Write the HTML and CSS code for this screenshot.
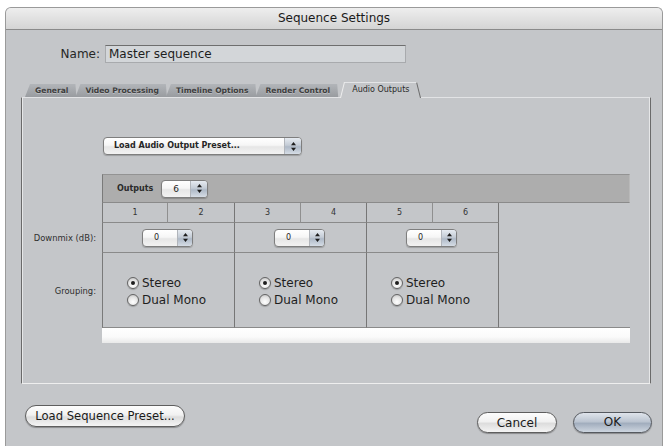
FILE: index.html
```html
<!DOCTYPE html>
<html>
<head>
<meta charset="utf-8">
<title>Sequence Settings</title>
<link rel="stylesheet" href="styles.css">
</head>
<body>
<div class="window">
  <div class="titlebar">Sequence Settings</div>
  <div class="name-row">
    <span class="name-label">Name:</span>
    <div class="name-input">Master sequence</div>
  </div>
  <div class="tabs">
    <div class="tab">General</div>
    <div class="tab">Video Processing</div>
    <div class="tab">Timeline Options</div>
    <div class="tab">Render Control</div>
    <div class="tab active"><span>Audio Outputs</span></div>
  </div>
  <div class="panel">
    <div class="popup preset"><span class="pv">Load Audio Output Preset...</span><span class="arrows"><svg width="7" height="11" viewBox="0 0 7 11"><path d="M3.5 1 L6 4.3 H1 Z M3.5 10 L6 6.7 H1 Z" fill="#1e1e1e"/></svg></span></div>

    <div class="hdr"><span class="hdr-label">Outputs</span><div class="popup outputs"><span class="pv">6</span><span class="arrows"><svg width="7" height="11" viewBox="0 0 7 11"><path d="M3.5 1 L6 4.3 H1 Z M3.5 10 L6 6.7 H1 Z" fill="#1e1e1e"/></svg></span></div></div>

    <div class="grid">
      <div class="lbl"></div>
      <div class="num first">1</div>
      <div class="num">2</div>
      <div class="num">3</div>
      <div class="num">4</div>
      <div class="num">5</div>
      <div class="num">6</div>
      <div class="blank"></div>

      <div class="lbl">Downmix (dB):</div>
      <div class="cell first"><div class="popup db"><span class="pv">0</span><span class="arrows"><svg width="7" height="11" viewBox="0 0 7 11"><path d="M3.5 1 L6 4.3 H1 Z M3.5 10 L6 6.7 H1 Z" fill="#1e1e1e"/></svg></span></div></div>
      <div class="cell"><div class="popup db"><span class="pv">0</span><span class="arrows"><svg width="7" height="11" viewBox="0 0 7 11"><path d="M3.5 1 L6 4.3 H1 Z M3.5 10 L6 6.7 H1 Z" fill="#1e1e1e"/></svg></span></div></div>
      <div class="cell"><div class="popup db"><span class="pv">0</span><span class="arrows"><svg width="7" height="11" viewBox="0 0 7 11"><path d="M3.5 1 L6 4.3 H1 Z M3.5 10 L6 6.7 H1 Z" fill="#1e1e1e"/></svg></span></div></div>

      <div class="lbl">Grouping:</div>
      <div class="cell group first">
        <div class="radios">
          <div class="radio-row"><span class="radio on"></span>Stereo</div>
          <div class="radio-row"><span class="radio"></span>Dual Mono</div>
        </div>
      </div>
      <div class="cell group">
        <div class="radios">
          <div class="radio-row"><span class="radio on"></span>Stereo</div>
          <div class="radio-row"><span class="radio"></span>Dual Mono</div>
        </div>
      </div>
      <div class="cell group">
        <div class="radios">
          <div class="radio-row"><span class="radio on"></span>Stereo</div>
          <div class="radio-row"><span class="radio"></span>Dual Mono</div>
        </div>
      </div>

      <div class="lbl"></div>
      <div class="whitebar"></div>
    </div>
  </div>
  <div class="footer">
    <div class="btn load">Load Sequence Preset...</div>
    <div class="right-btns">
      <div class="btn cancel">Cancel</div>
      <div class="btn ok">OK</div>
    </div>
  </div>
</div>
</body>
</html>
```
FILE: styles.css
```css
* { box-sizing: border-box; }
html, body { margin: 0; padding: 0; background: #ffffff; }
body { font-family: "DejaVu Sans", "Liberation Sans", sans-serif; color: #262626; }

.window {
  margin: 7px 0 0 5px;
  width: 658px;
  height: 439px;
  background: #c4c6c9;
  border: 1px solid #9a9a9a;
  border-bottom: none;
  border-radius: 6px 6px 0 0;
}

.titlebar {
  height: 22px;
  background: linear-gradient(#eeeeee, #d4d4d4);
  border-bottom: 1px solid #8a8a8a;
  border-radius: 5px 5px 0 0;
  text-align: center;
  font-size: 12px;
  line-height: 21px;
  color: #1a1a1a;
}

.name-row {
  display: flex;
  align-items: center;
  margin-top: 15px;
  height: 18px;
}
.name-label {
  width: 94px;
  text-align: right;
  font-size: 12px;
  margin-right: 5px;
}
.name-input {
  width: 301px;
  height: 18px;
  background: #d3d6d9;
  border: 1px solid #a8aaad;
  border-top-color: #6e6e6e;
  font-size: 12px;
  line-height: 16px;
  padding-left: 3px;
  color: #1e1e1e;
}

.tabs {
  display: flex;
  align-items: flex-end;
  height: 15px;
  margin-top: 19px;
  margin-left: 19px;
}
.tab {
  height: 13px;
  padding: 0 9px 0 10px;
  margin-right: -2px;
  font-size: 7.6px;
  font-weight: bold;
  line-height: 13px;
  color: #3e3e3e;
  text-shadow: 0 1px 0 rgba(255,255,255,0.3);
  background: linear-gradient(#b2b5b9, #999ca0);
  clip-path: polygon(0 100%, 5px 0, calc(100% - 2px) 0, calc(100% - 1px) 100%);
}
.tab.active {
  position: relative;
  height: 15px;
  line-height: 16px;
  padding: 0 14px 0 14px;
  margin-left: 1px;
  background: none;
  clip-path: none;
  color: #2a2a2a;
  font-size: 8px;
  font-weight: normal;
  text-shadow: none;
}
.tab.active span { position: relative; z-index: 1; }
.tab.active::before,
.tab.active::after {
  content: "";
  position: absolute;
  top: 0;
  bottom: -1px;
  width: 60%;
  background: #c4c6c9;
  border-top: 1px solid #e4e5e7;
}
.tab.active::before {
  left: 2px;
  border-left: 1px solid #eeeeee;
  transform: skewX(-14deg);
  transform-origin: bottom left;
}
.tab.active::after {
  right: 2px;
  border-right: 1px solid #6c6c6c;
  transform: skewX(14deg);
  transform-origin: bottom right;
}

.panel {
  margin-left: 15px;
  width: 630px;
  height: 287px;
  border-top: 1px solid #e2e3e5;
  border-left: 1px solid #6a6a6a;
  border-right: 1px solid #6a6a6a;
  border-bottom: 1px solid #eeeeee;
  box-shadow: inset 1px 0 0 #e6e7e8, inset -1px 0 0 #e6e7e8;
  padding-top: 39px;
}

.popup {
  display: flex;
  height: 18px;
  border: 1px solid #7e7e7e;
  border-radius: 4px;
  background: linear-gradient(#ffffff, #f6f6f6 45%, #e6e6e6 55%, #f2f2f2);
  box-shadow: 0 1px 1px rgba(0,0,0,0.2);
  overflow: hidden;
}
.popup .pv {
  flex: 1;
  font-size: 8px;
  font-weight: bold;
  line-height: 16px;
  padding-left: 10px;
  color: #262626;
}
.popup .arrows {
  width: 17px;
  border-left: 1px solid #b1b5bb;
  background: linear-gradient(#e6ebf1, #c4ccd6 45%, #aeb9c7 55%, #d6dde6);
  display: flex;
  align-items: center;
  justify-content: center;
}
.popup .arrows svg { display: block; }

.preset {
  margin-left: 81px;
  width: 199px;
}

.hdr {
  margin: 19px 0 0 80px;
  width: 528px;
  height: 29px;
  background: #adadad;
  border-top: 1px solid #939393;
  border-left: 1px solid #7a7a7a;
  border-right: 1px solid #b9b9b9;
  border-bottom: 1px solid #8a8a8a;
  display: flex;
  align-items: center;
  padding-left: 14px;
}
.hdr-label {
  font-size: 8px;
  font-weight: bold;
  margin-right: 8px;
  color: #2a2a2a;
}
.outputs { width: 47px; }
.outputs .pv { padding-left: 11px; font-weight: normal; font-size: 9px; }

.grid {
  display: grid;
  grid-template-columns: 80px 66px 67px 66px 66px 66px 66px 131px;
  grid-template-rows: 20px 30px 75px 15px;
}

.lbl {
  grid-column: 1;
  font-size: 8.4px;
  text-align: right;
  padding-right: 6px;
  align-self: center;
  white-space: nowrap;
  color: #2e2e2e;
}

.num {
  font-size: 8px;
  text-align: center;
  line-height: 19px;
  color: #333;
  border-right: 1px solid #8f8f8f;
  border-bottom: 1px solid #8a8a8a;
}
.num:nth-child(odd) { border-right-color: #767676; }
.first { border-left: 1px solid #7a7a7a; }

.blank {
  grid-column: 8;
  grid-row: 1 / 4;
  border-bottom: 1px solid #8a8a8a;
}

.cell {
  grid-column: span 2;
  border-right: 1px solid #767676;
  border-bottom: 1px solid #8a8a8a;
  display: flex;
  align-items: center;
  justify-content: center;
}
.db { width: 51px; margin-left: -2px; }
.db .pv { padding-left: 11px; font-weight: normal; font-size: 8px; }
.db .arrows { width: 15px; }

.group { padding-right: 4px; }
.radios { display: flex; flex-direction: column; gap: 3px; margin-top: 2px; }
.radio-row {
  display: flex;
  align-items: center;
  font-size: 12px;
  line-height: 14px;
  color: #1e1e1e;
}
.radio {
  width: 12px;
  height: 12px;
  border-radius: 50%;
  border: 1px solid #646464;
  background: radial-gradient(circle at 50% 70%, #ffffff, #e4e4e4 55%, #b8b8b8);
  margin-right: 3px;
  position: relative;
  box-shadow: 0 1px 1px rgba(0,0,0,0.2);
}
.radio.on::after {
  content: "";
  position: absolute;
  left: 3px;
  top: 3px;
  width: 4px;
  height: 4px;
  border-radius: 50%;
  background: #1e1e1e;
}

.whitebar {
  grid-column: 2 / 9;
  background: linear-gradient(#ffffff, #fafafa 60%, #e9e9e9);
}

.footer {
  display: flex;
  justify-content: space-between;
  align-items: flex-start;
  margin-top: 21px;
  padding: 0 10px 0 19px;
}
.right-btns { display: flex; gap: 16px; margin-top: 7px; }
.btn {
  height: 22px;
  border: 1px solid #5e5e5e;
  border-radius: 11px;
  background: linear-gradient(#fdfdfd, #f1f1f1 45%, #dddddd 55%, #f4f4f4);
  box-shadow: 0 1px 1px rgba(0,0,0,0.3);
  font-size: 12px;
  line-height: 20px;
  text-align: center;
  color: #1a1a1a;
}
.load { width: 160px; font-size: 11.6px; }
.cancel { width: 80px; height: 21px; line-height: 20px; }
.ok {
  width: 79px;
  height: 21px;
  line-height: 19px;
  background: linear-gradient(#dfe4eb, #bcc5d1 45%, #a2aebe 55%, #cdd5df);
  border-color: #55595f;
}
```
